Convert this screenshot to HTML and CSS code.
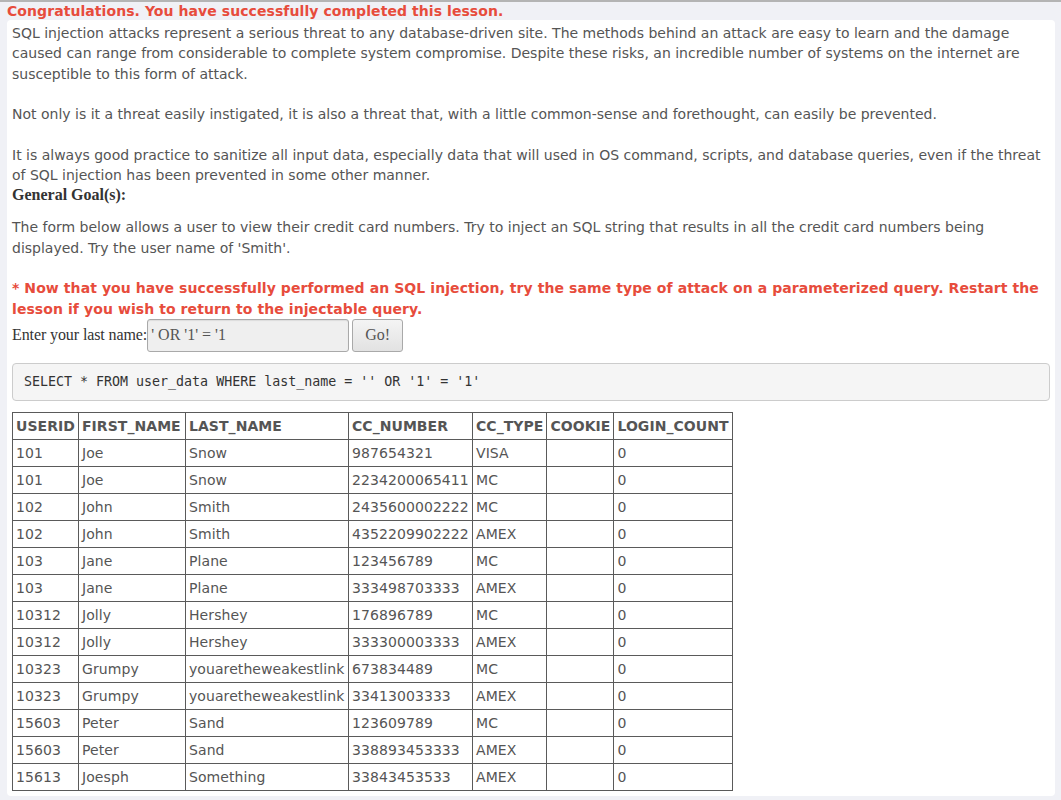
FILE: index.html
```html
<!DOCTYPE html>
<html>
<head>
<meta charset="utf-8">
<link rel="stylesheet" href="styles.css">
</head>
<body>
<div class="topline"></div>
<div class="congrats">Congratulations. You have successfully completed this lesson.</div>
<div class="panel">
  <div class="lesson-text">SQL injection attacks represent a serious threat to any database-driven site. The methods behind an attack are easy to learn and the damage caused can range from considerable to complete system compromise. Despite these risks, an incredible number of systems on the internet are susceptible to this form of attack.<br><br>Not only is it a threat easily instigated, it is also a threat that, with a little common-sense and forethought, can easily be prevented.<br><br>It is always good practice to sanitize all input data, especially data that will used in OS command, scripts, and database queries, even if the threat of SQL injection has been prevented in some other manner.</div>
  <div class="goal-title">General Goal(s):</div>
  <div class="lesson-text goal-text">The form below allows a user to view their credit card numbers. Try to inject an SQL string that results in all the credit card numbers being displayed. Try the user name of 'Smith'.<br><br><span class="warn">* Now that you have successfully performed an SQL injection, try the same type of attack on a parameterized query. Restart the lesson if you wish to return to the injectable query.</span></div>
  <form class="query-form">
    <label class="form-label">Enter your last name:</label><input class="name-input" type="text" value="' OR '1' = '1"><button class="go-btn" type="button">Go!</button>
  </form>
  <pre class="sql">SELECT * FROM user_data WHERE last_name = '' OR '1' = '1'</pre>
  <table class="results">
    <tr><th class="c-id">USERID</th><th class="c-first">FIRST_NAME</th><th class="c-last">LAST_NAME</th><th class="c-num">CC_NUMBER</th><th class="c-type">CC_TYPE</th><th class="c-cookie">COOKIE</th><th class="c-login">LOGIN_COUNT</th></tr>
    <tr><td>101</td><td>Joe</td><td>Snow</td><td>987654321</td><td>VISA</td><td></td><td>0</td></tr>
    <tr><td>101</td><td>Joe</td><td>Snow</td><td>2234200065411</td><td>MC</td><td></td><td>0</td></tr>
    <tr><td>102</td><td>John</td><td>Smith</td><td>2435600002222</td><td>MC</td><td></td><td>0</td></tr>
    <tr><td>102</td><td>John</td><td>Smith</td><td>4352209902222</td><td>AMEX</td><td></td><td>0</td></tr>
    <tr><td>103</td><td>Jane</td><td>Plane</td><td>123456789</td><td>MC</td><td></td><td>0</td></tr>
    <tr><td>103</td><td>Jane</td><td>Plane</td><td>333498703333</td><td>AMEX</td><td></td><td>0</td></tr>
    <tr><td>10312</td><td>Jolly</td><td>Hershey</td><td>176896789</td><td>MC</td><td></td><td>0</td></tr>
    <tr><td>10312</td><td>Jolly</td><td>Hershey</td><td>333300003333</td><td>AMEX</td><td></td><td>0</td></tr>
    <tr><td>10323</td><td>Grumpy</td><td>youaretheweakestlink</td><td>673834489</td><td>MC</td><td></td><td>0</td></tr>
    <tr><td>10323</td><td>Grumpy</td><td>youaretheweakestlink</td><td>33413003333</td><td>AMEX</td><td></td><td>0</td></tr>
    <tr><td>15603</td><td>Peter</td><td>Sand</td><td>123609789</td><td>MC</td><td></td><td>0</td></tr>
    <tr><td>15603</td><td>Peter</td><td>Sand</td><td>338893453333</td><td>AMEX</td><td></td><td>0</td></tr>
    <tr><td>15613</td><td>Joesph</td><td>Something</td><td>33843453533</td><td>AMEX</td><td></td><td>0</td></tr>
  </table>
</div>
</body>
</html>
```

FILE: styles.css
```css
html, body {
  margin: 0;
  padding: 0;
}
body {
  background: #f0f1f6;
  font-family: "DejaVu Sans", sans-serif;
  font-size: 14px;
  color: #555;
  height: 800px;
  overflow: hidden;
}
.topline {
  height: 2px;
  background: #b4b4b4;
}
.congrats {
  padding-left: 7px;
  height: 18px;
  line-height: 18px;
  font-weight: bold;
  font-size: 14px;
  letter-spacing: 0.07px;
  color: #e74c3c;
}
.panel {
  margin-left: 7px;
  margin-right: 6px;
  background: #fff;
  border-radius: 4px;
  padding: 3px 5px 5px 5px;
}
.lesson-text {
  line-height: 20.3px;
  color: #555;
}
.goal-title {
  font-family: "Liberation Serif", serif;
  font-weight: bold;
  font-size: 16px;
  line-height: 20px;
  color: #333;
}
.goal-text {
  margin-top: 12px;
}
.warn {
  color: #e74c3c;
  font-weight: bold;
  letter-spacing: 0.08px;
}
.query-form {
  margin: 0;
  display: flex;
  align-items: center;
  height: 33px;
}
.form-label {
  font-family: "Liberation Serif", serif;
  font-size: 16px;
  letter-spacing: -0.1px;
  color: #333;
}
.name-input {
  box-sizing: border-box;
  width: 202px;
  height: 33px;
  margin: 0 3px 0 0;
  padding: 0 3px;
  font-family: "Liberation Serif", serif;
  font-size: 16px;
  color: #555;
  background: #efefef;
  border: 1px solid #a9a9a9;
  border-radius: 3px;
  box-shadow: inset 0 1px 1px rgba(0,0,0,0.08);
}
.go-btn {
  box-sizing: border-box;
  width: 51px;
  height: 33px;
  font-family: "Liberation Serif", serif;
  font-size: 16px;
  color: #555;
  background: linear-gradient(#f4f4f4, #e2e2e2);
  border: 1px solid #a9a9a9;
  border-radius: 3px;
}
.sql {
  margin: 11px 0 11px 0;
  padding: 9px 11px;
  font-family: "DejaVu Sans Mono", monospace;
  font-size: 13.3px;
  line-height: 18px;
  color: #333;
  background: #f5f5f5;
  border: 1px solid #ccc;
  border-radius: 4px;
}
.results {
  border-collapse: collapse;
  border: 1px solid #555;
}
.results th, .results td {
  border: 1px solid #5a5a5a;
  padding: 4px 3px;
  line-height: 18px;
  text-align: left;
  color: #555;
  white-space: nowrap;
}
.results th {
  font-weight: bold;
  letter-spacing: 0.05px;
}
.results td {
  letter-spacing: 0.08px;
}
.c-id { width: 59px; }
.c-first { width: 100px; }
.c-last { width: 156px; }
.c-num { width: 117px; }
.c-type { width: 67px; }
.c-cookie { width: 60px; }
.c-login { width: 111px; }
```
